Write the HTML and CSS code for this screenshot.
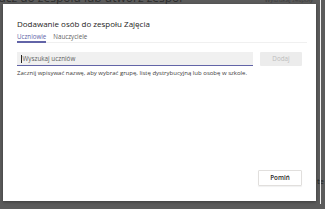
FILE: index.html
```html
<!DOCTYPE html>
<html lang="pl">
<head>
<meta charset="utf-8">
<link rel="stylesheet" href="styles.css">
</head>
<body>
<div class="page">
  <div class="page-head">
    <div class="page-title">acz do zespołu lub utwórz zespół</div>
    <div class="page-search">Wyszukaj zespoły</div>
  </div>
  <div class="page-side">te</div>
  <div class="scroll-line"></div>
</div>
<div class="modal">
  <div class="modal-title">Dodawanie osób do zespołu Zajęcia</div>
  <div class="tabs">
    <div class="tab active">Uczniowie</div>
    <div class="tab">Nauczyciele</div>
  </div>
  <div class="search-row">
    <div class="search-input"><span class="caret"></span>Wyszukaj uczniów</div>
    <div class="btn-add">Dodaj</div>
  </div>
  <div class="hint">Zacznij wpisywać nazwę, aby wybrać grupę, listę dystrybucyjną lub osobę w szkole.</div>
  <div class="spacer"></div>
  <div class="footer">
    <div class="btn-skip">Pomiń</div>
  </div>
</div>
</body>
</html>
```
FILE: styles.css
```css
html, body {
  margin: 0;
  padding: 0;
}
body {
  width: 325px;
  height: 209px;
  overflow: hidden;
  background: #5b5b5b;
  font-family: "Open Sans", "Noto Sans", sans-serif;
  position: relative;
}
.page-head {
  display: flex;
  justify-content: space-between;
  align-items: flex-end;
  height: 6px;
  margin-top: -2px;
  overflow: hidden;
}
.page-title {
  font-size: 12px;
  line-height: 12px;
  color: #2e2e2e;
  margin-left: -1px;
  white-space: nowrap;
}
.page-search {
  font-size: 6px;
  line-height: 6px;
  color: #3a3a3a;
  margin-right: 12px;
  margin-bottom: 1px;
}
.page-side {
  position: absolute;
  left: 317px;
  top: 177px;
  font-size: 7px;
  font-weight: 600;
  color: #2a2a2a;
}
.scroll-line {
  position: absolute;
  left: 320px;
  top: 0;
  width: 1px;
  height: 204px;
  background: #f2f2f2;
}
.modal {
  position: absolute;
  left: 3px;
  top: 4px;
  width: 313px;
  height: 197px;
  box-sizing: border-box;
  background: #ffffff;
  padding: 14px 14px 15px 14px;
  display: flex;
  flex-direction: column;
  box-shadow: 0 1px 3px rgba(0,0,0,0.35);
}
.modal-title {
  font-size: 8px;
  line-height: 12px;
  font-weight: 500;
  color: #252423;
}
.tabs {
  display: flex;
  gap: 7px;
  margin-top: 2px;
  margin-right: -5px;
  border-bottom: 1px solid #f0f0f0;
}
.tab {
  font-size: 6.2px;
  line-height: 9px;
  color: #616161;
  border-bottom: 2px solid transparent;
  margin-bottom: -1px;
}
.tab.active {
  color: #6264a7;
  border-bottom-color: #6264a7;
}
.search-row {
  display: flex;
  gap: 7px;
  margin-top: 9px;
}
.search-input {
  flex: 1;
  height: 13px;
  background: #f0f0f0;
  border-bottom: 1px solid #6264a7;
  font-size: 6.3px;
  line-height: 13px;
  color: #616161;
  padding-left: 4px;
  display: flex;
  align-items: center;
}
.caret {
  display: inline-block;
  width: 1px;
  height: 8px;
  background: #252423;
  margin-right: 0.5px;
}
.btn-add {
  width: 42px;
  height: 14px;
  background: #ececec;
  color: #bdbdbd;
  font-size: 6.3px;
  line-height: 14px;
  text-align: center;
  border-radius: 1px;
}
.hint {
  margin-top: 3px;
  font-size: 6px;
  line-height: 8px;
  color: #3b3a39;
  white-space: nowrap;
}
.spacer {
  flex: 1;
}
.footer {
  display: flex;
  justify-content: flex-end;
}
.btn-skip {
  width: 42px;
  height: 14px;
  border: 1px solid #e1dfdd;
  box-shadow: 0 1px 1px rgba(0,0,0,0.06);
  font-size: 6.3px;
  font-weight: 600;
  line-height: 14px;
  text-align: center;
  color: #252423;
  border-radius: 1px;
}
```
